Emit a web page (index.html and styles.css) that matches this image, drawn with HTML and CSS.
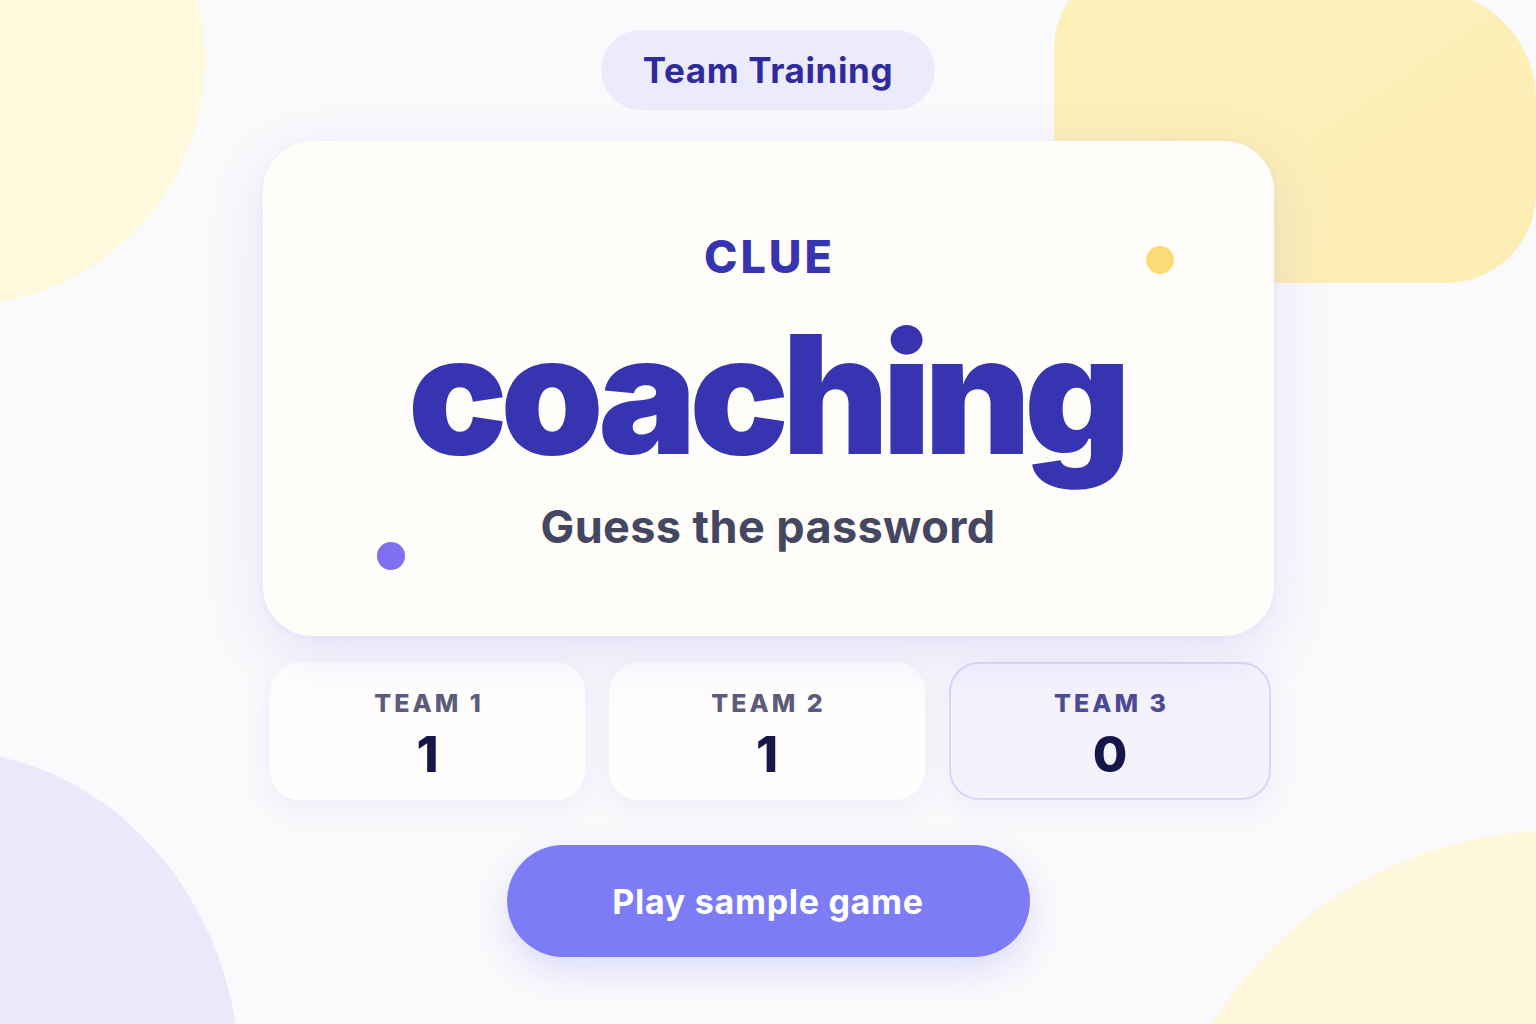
FILE: index.html
```html
<!DOCTYPE html>
<html lang="en">
<head>
<meta charset="utf-8">
<title>Team Training</title>
<link rel="stylesheet" href="styles.css">
</head>
<body>
<svg class="backdrop" width="1536" height="1024" viewBox="0 0 1536 1024" aria-hidden="true">
  <defs>
    <linearGradient id="trGrad" x1="0" y1="0" x2="1" y2="1">
      <stop offset="0" stop-color="#fdf1bb"/>
      <stop offset="1" stop-color="#fcedb3"/>
    </linearGradient>
  </defs>
  <circle cx="-40" cy="60" r="245" fill="#fef8dc"/>
  <path d="M 1054,50 A 90 90 0 0 1 1144,-40 L 1426,-10 A 110 110 0 0 1 1536,100 L 1536,193 A 90 90 0 0 1 1446,283 L 1144,283 A 90 90 0 0 1 1054,193 Z" fill="url(#trGrad)"/>
  <ellipse cx="-60" cy="1080" rx="300" ry="330" fill="#ebe8fc"/>
  <circle cx="1560" cy="1240" r="410" fill="#fef7dc"/>
</svg>
<main class="page">
  <div class="pill">Team Training</div>
  <section class="clue-card">
    <span class="dot dot-yellow"></span>
    <span class="dot dot-purple"></span>
    <div class="clue-label">CLUE</div>
    <div class="clue-word">coaching</div>
    <div class="clue-hint">Guess the password</div>
  </section>
  <section class="teams">
    <div class="team">
      <div class="team-name">TEAM 1</div>
      <div class="team-score">1</div>
    </div>
    <div class="team">
      <div class="team-name">TEAM 2</div>
      <div class="team-score">1</div>
    </div>
    <div class="team team-active">
      <div class="team-name">TEAM 3</div>
      <div class="team-score">0</div>
    </div>
  </section>
  <button class="play">Play sample game</button>
</main>
</body>
</html>
```

FILE: styles.css
```css
html, body {
  margin: 0;
  padding: 0;
}
body {
  width: 1536px;
  height: 1024px;
  overflow: hidden;
  position: relative;
  background: #faf9fb;
  font-family: Inter, "Noto Sans", sans-serif;
}
.backdrop {
  position: absolute;
  left: 0;
  top: 0;
  z-index: 0;
  display: block;
}
.page {
  position: relative;
  z-index: 1;
  display: flex;
  flex-direction: column;
  align-items: center;
  padding-top: 30px;
}
.pill {
  width: 334px;
  height: 80px;
  box-sizing: border-box;
  border-radius: 40px;
  background: #ecebfb;
  color: #2f2b9c;
  font-size: 35px;
  font-weight: 700;
  display: flex;
  align-items: center;
  justify-content: center;
  letter-spacing: 0.6px;
}
.clue-card {
  position: relative;
  margin-top: 31px;
  width: 1011px;
  height: 495px;
  box-sizing: border-box;
  border-radius: 50px;
  background: #fefdf9;
  box-shadow: 0 18px 60px rgba(125, 115, 235, 0.16), 0 2px 8px rgba(125, 115, 235, 0.06);
  display: flex;
  flex-direction: column;
  align-items: center;
  padding-top: 93px;
}
.dot {
  position: absolute;
  width: 28px;
  height: 28px;
  border-radius: 50%;
}
.dot-yellow {
  left: 883px;
  top: 105px;
  background: #fbdc78;
}
.dot-purple {
  left: 114px;
  top: 401px;
  background: #8070f1;
}
.clue-label {
  font-size: 45px;
  line-height: 1;
  font-weight: 800;
  letter-spacing: 3px;
  color: #3634b0;
  padding-left: 3px;
}
.clue-word {
  margin-top: 33px;
  font-size: 165px;
  line-height: 1;
  font-weight: 900;
  letter-spacing: -7px;
  color: #3634b0;
  padding-right: 4px;
}
.clue-hint {
  margin-top: 27px;
  font-size: 45px;
  line-height: 1;
  font-weight: 700;
  letter-spacing: 0.4px;
  color: #45465f;
}
.teams {
  margin-top: 26px;
  margin-left: 6px;
  width: 1002px;
  display: grid;
  grid-template-columns: 315px 316px 322px;
  column-gap: 24px;
}
.team {
  height: 138px;
  box-sizing: border-box;
  border-radius: 30px;
  background: #fffefd;
  box-shadow: 0 8px 30px rgba(125, 115, 235, 0.10);
  display: flex;
  flex-direction: column;
  align-items: center;
  padding-top: 29px;
}
.team-active {
  background: #f4f3fd;
  border: 2px solid #d9d7f6;
  padding-top: 27px;
}
.team-name {
  font-size: 25px;
  line-height: 1;
  font-weight: 800;
  letter-spacing: 3px;
  color: #5d5c7c;
  padding-left: 3px;
}
.team-active .team-name {
  color: #4d4b95;
}
.team-score {
  margin-top: 13px;
  font-size: 50px;
  line-height: 1;
  font-weight: 800;
  color: #17164a;
}
.play {
  margin-top: 45px;
  width: 523px;
  height: 112px;
  border: none;
  border-radius: 56px;
  background: #7b7cf6;
  color: #ffffff;
  font-family: Inter, "Noto Sans", sans-serif;
  font-size: 34px;
  font-weight: 700;
  letter-spacing: 0.7px;
  box-shadow: 0 14px 34px rgba(123, 124, 246, 0.22);
  cursor: pointer;
}
```
